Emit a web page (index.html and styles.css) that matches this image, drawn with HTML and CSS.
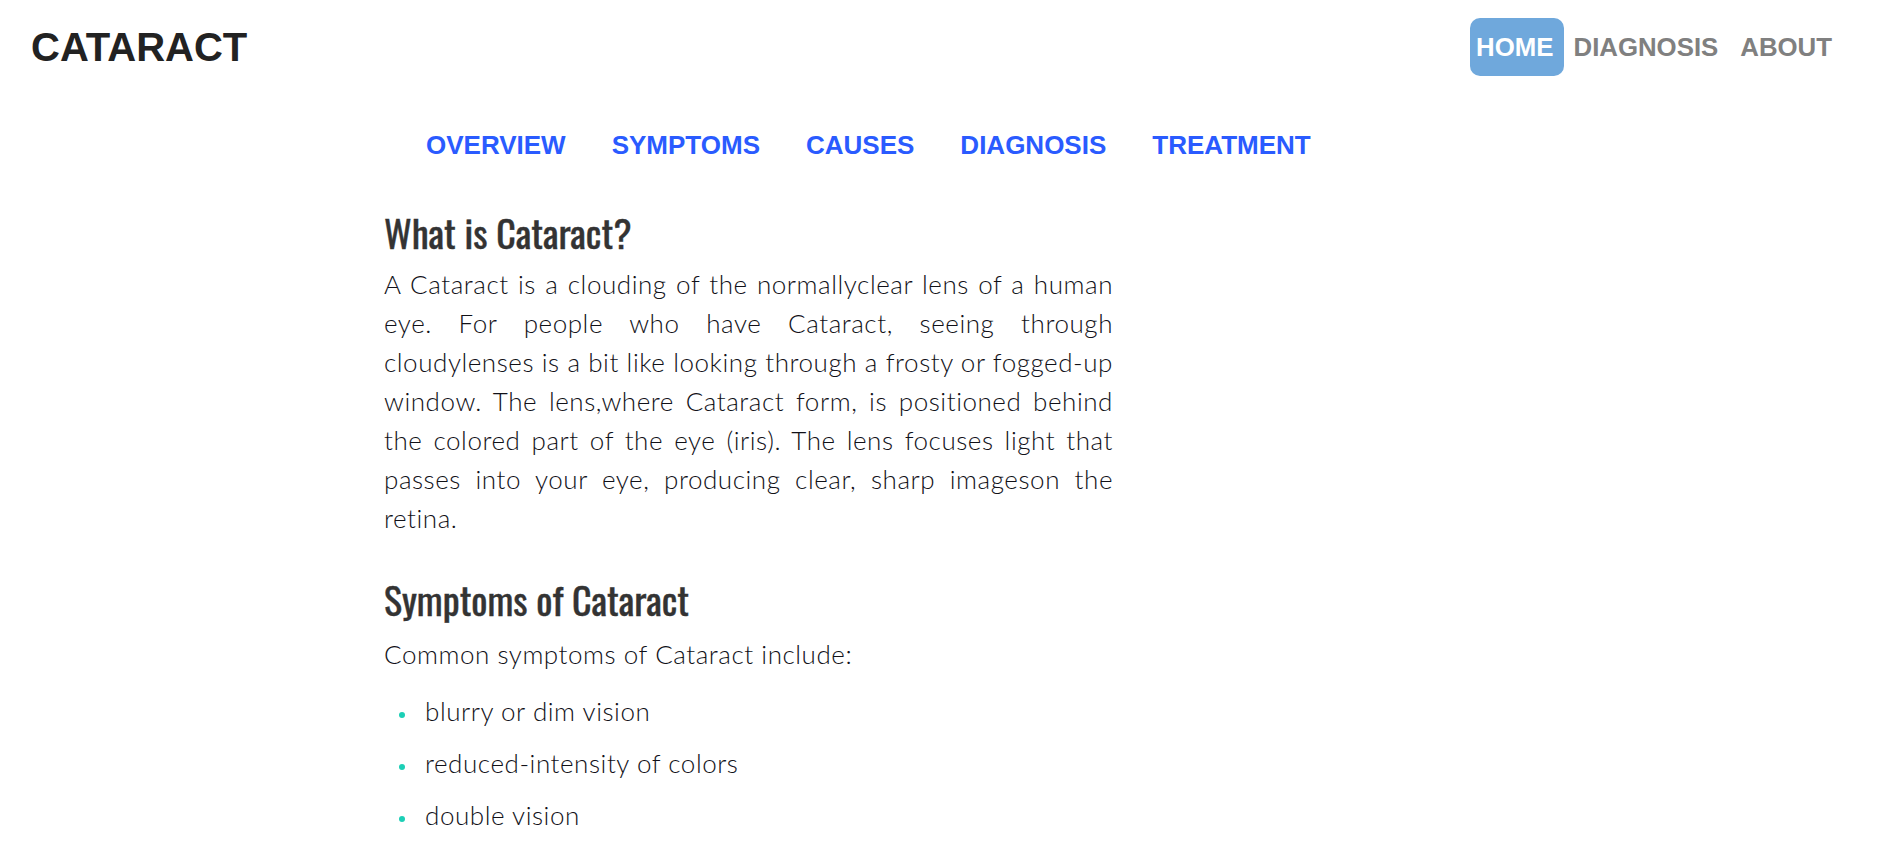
FILE: index.html
```html
<!DOCTYPE html>
<html lang="en">
<head>
<meta charset="utf-8">
<title>Cataract</title>
<link rel="stylesheet" href="styles.css">
</head>
<body>
<header class="topbar">
  <div class="logo">CATARACT</div>
  <nav class="mainnav">
    <a class="navlink active" href="#">HOME</a>
    <a class="navlink" href="#">DIAGNOSIS</a>
    <a class="navlink" href="#">ABOUT</a>
  </nav>
</header>
<main class="content">
  <ul class="subnav">
    <li><a href="#">OVERVIEW</a></li>
    <li><a href="#">SYMPTOMS</a></li>
    <li><a href="#">CAUSES</a></li>
    <li><a href="#">DIAGNOSIS</a></li>
    <li><a href="#">TREATMENT</a></li>
  </ul>
  <section class="section">
    <h2 class="heading">What is Cataract?</h2>
    <p class="text justified">A Cataract is a clouding of the normallyclear lens of a human eye. For people who have Cataract, seeing through cloudylenses is a bit like looking through a frosty or fogged-up window. The lens,where Cataract form, is positioned behind the colored part of the eye (iris). The lens focuses light that passes into your eye, producing clear, sharp imageson the retina.</p>
  </section>
  <section class="section second">
    <h2 class="heading">Symptoms of Cataract</h2>
    <p class="text">Common symptoms of Cataract include:</p>
    <ul class="bullets">
      <li>blurry or dim vision</li>
      <li>reduced-intensity of colors</li>
      <li>double vision</li>
    </ul>
  </section>
</main>
</body>
</html>
```
FILE: styles.css
```css
html, body {
  margin: 0;
  padding: 0;
  background: #ffffff;
}

body {
  font-family: "Liberation Sans", Arial, sans-serif;
}

.topbar {
  display: flex;
  justify-content: space-between;
  align-items: center;
  padding: 18px 37px 0 31px;
}

.logo {
  font-family: "Liberation Sans", Arial, sans-serif;
  font-weight: bold;
  font-size: 40px;
  line-height: 58px;
  color: #222222;
}

.mainnav {
  display: flex;
  gap: 6px;
}

.navlink {
  display: block;
  font-family: "Liberation Sans", Arial, sans-serif;
  font-weight: bold;
  font-size: 25.8px;
  line-height: 58px;
  padding: 0 8px;
  color: #808080;
  text-decoration: none;
  border-radius: 10px;
}

.navlink.active {
  background: #6fa8dc;
  color: #ffffff;
  padding: 0 10px 0 6px;
  margin-right: -4px;
}

.content {
  margin-left: 384px;
  width: 729px;
}

.subnav {
  list-style: none;
  display: flex;
  gap: 46px;
  margin: 54px 0 0 0;
  padding: 0 0 0 42px;
}

.subnav a {
  display: block;
  font-family: "Liberation Sans", Arial, sans-serif;
  font-weight: bold;
  font-size: 26px;
  line-height: 30px;
  color: #2a5bff;
  text-decoration: none;
}

.section {
  margin-top: 50px;
}

.section.second {
  margin-top: 39px;
}

.heading {
  margin: 0;
  font-family: "Oswald", "Liberation Sans Narrow", "DejaVu Sans Condensed", sans-serif;
  font-weight: normal;
  font-size: 38px;
  line-height: 45px;
  color: #333333;
  -webkit-text-stroke: 0.4px #333333;
}

.text {
  margin: 10px 0 0 0;
  font-family: "Source Sans Pro", Lato, "Open Sans", sans-serif;
  font-weight: 300;
  font-size: 26px;
  line-height: 39px;
  letter-spacing: 0.55px;
  color: #111118;
}

.second .text {
  margin-top: 13px;
}

.justified {
  text-align: justify;
}

.bullets {
  list-style: none;
  margin: 18px 0 0 0;
  padding: 0 0 0 15px;
  font-family: "Source Sans Pro", Lato, "Open Sans", sans-serif;
  font-weight: 300;
  font-size: 26px;
  line-height: 39px;
  letter-spacing: 0.55px;
  color: #111118;
}

.bullets li {
  margin-bottom: 13px;
}

.bullets li::before {
  content: "";
  display: inline-block;
  width: 6px;
  height: 6px;
  border-radius: 50%;
  background: #1ccfb6;
  margin-right: 20px;
  vertical-align: middle;
}
```
